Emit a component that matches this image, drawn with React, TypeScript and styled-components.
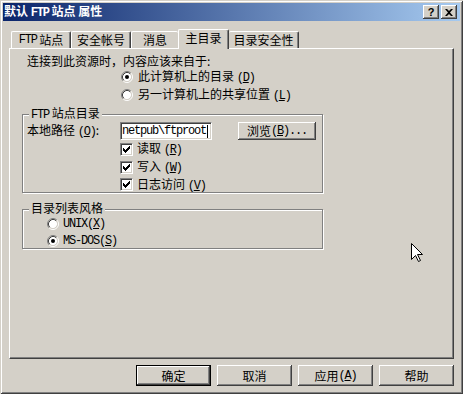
import styled, { createGlobalStyle } from 'styled-components'

const face = '#D4D0C8'
const shadow = '#808080'
const dark = '#404040'

const GlobalStyle = createGlobalStyle`
  html, body {
    margin: 0;
    padding: 0;
    background: ${face};
  }
  body {
    font-family: "Noto Sans CJK SC", "Liberation Sans", sans-serif;
    font-size: 12px;
    color: #000;
  }
  * {
    box-sizing: border-box;
  }
`

const Window = styled.div`
  position: relative;
  width: 463px;
  height: 394px;
  padding: 3px;
  display: flex;
  flex-direction: column;
  background: ${face};
  box-shadow: inset 1px 1px ${face}, inset -1px -1px ${dark}, inset 2px 2px #fff, inset -2px -2px ${shadow};
`

const TitleBar = styled.div`
  flex: none;
  height: 18px;
  display: flex;
  align-items: center;
  justify-content: space-between;
  padding: 0 3px 0 1px;
  background: linear-gradient(to right, #0a246a, #a6caf0);
  color: #fff;
  font-weight: bold;
  line-height: 18px;
`

const CaptionButtons = styled.div`
  display: flex;
  gap: 2px;
`

const CaptionButton = styled.div`
  width: 16px;
  height: 14px;
  display: flex;
  align-items: center;
  justify-content: center;
  background: ${face};
  color: #000;
  font-family: "Liberation Sans", sans-serif;
  font-size: 11px;
  font-weight: bold;
  box-shadow: inset -1px -1px ${dark}, inset 1px 1px #fff, inset -2px -2px ${shadow};
`

const Body = styled.div`
  flex: 1;
  display: flex;
  flex-direction: column;
  padding: 8px 6px 0 6px;
`

const TabRow = styled.div`
  height: 19px;
  display: flex;
  align-items: flex-end;
  padding-left: 2px;
`

const Tab = styled.div<{ $w: number; $active?: boolean; $noLeft?: boolean; $noRight?: boolean }>`
  position: relative;
  z-index: ${p => (p.$active ? 1 : 0)};
  width: ${p => p.$w}px;
  height: ${p => (p.$active ? 20 : 17)}px;
  margin-bottom: ${p => (p.$active ? -1 : 0)}px;
  display: flex;
  align-items: center;
  justify-content: center;
  padding-bottom: ${p => (p.$active ? 3 : 0)}px;
  background: ${face};
  border-top: 1px solid #fff;
  border-left: ${p => (p.$noLeft ? 'none' : '1px solid #fff')};
  border-right: ${p => (p.$noRight ? 'none' : `1px solid ${dark}`)};
  box-shadow: ${p => (p.$noRight ? 'none' : `inset -1px 0 ${shadow}`)};
  border-top-left-radius: 2px;
  border-top-right-radius: 2px;
  white-space: nowrap;
  line-height: 14px;
`

const Panel = styled.div`
  height: 311px;
  padding: 5px 12px 0 12px;
  border: 1px solid;
  border-color: #fff ${dark} ${dark} #fff;
  box-shadow: inset -1px -1px ${shadow};
`

const Intro = styled.div`
  height: 14px;
  line-height: 14px;
  margin-left: 5px;
`

const Row = styled.div<{ $h: number; $indent: number; $gap: number }>`
  height: ${p => p.$h}px;
  display: flex;
  align-items: center;
  gap: ${p => p.$gap}px;
  padding-left: ${p => p.$indent}px;
  line-height: 14px;
  white-space: nowrap;
`

const Group = styled.div<{ $top: number; $h: number; $pad: string }>`
  position: relative;
  width: 301px;
  height: ${p => p.$h}px;
  margin-top: ${p => p.$top}px;
  padding: ${p => p.$pad};
  border: 1px solid ${shadow};
  box-shadow: inset 1px 1px #fff, 1px 1px #fff;
`

const GroupLabel = styled.span`
  position: absolute;
  top: -8px;
  left: 6px;
  height: 12px;
  padding: 0 2px;
  background: ${face};
  line-height: 12px;
  white-space: nowrap;
`

const PathLabel = styled.span`
  width: 93px;
  flex: none;
`

const TextInput = styled.div`
  width: 92px;
  height: 18px;
  display: flex;
  align-items: center;
  background: #fff;
  border: 1px solid;
  border-color: ${shadow} #fff #fff ${shadow};
  box-shadow: inset 1px 1px ${dark}, inset -1px -1px ${face};
  padding-left: 1px;
  overflow: hidden;
`

const Caret = styled.span`
  width: 1px;
  height: 13px;
  margin-left: 1px;
  background: #000;
`

const Button = styled.div<{ $w: number; $h: number; $default?: boolean }>`
  width: ${p => p.$w}px;
  height: ${p => p.$h}px;
  display: flex;
  align-items: center;
  justify-content: center;
  background: ${face};
  border: ${p => (p.$default ? '1px solid #000' : 'none')};
  box-shadow: inset -1px -1px ${dark}, inset 1px 1px #fff, inset -2px -2px ${shadow};
  line-height: 14px;
  white-space: nowrap;
`

const BrowseButton = styled(Button)`
  margin-left: 26px;
`

const ButtonRow = styled.div`
  display: flex;
  justify-content: flex-end;
  gap: 6px;
  margin-top: 6px;
`

const Latin = styled.span<{ $bold?: boolean }>`
  font-family: "Liberation Mono", "DejaVu Sans Mono", monospace;
  font-size: 12px;
  letter-spacing: -1.2px;
  font-weight: ${p => (p.$bold ? 'bold' : 'normal')};
`

const Key = styled.span`
  text-decoration: underline;
`

const CheckBox = styled.span`
  width: 13px;
  height: 13px;
  flex: none;
  display: flex;
  align-items: center;
  justify-content: center;
  background: #fff;
  border: 1px solid;
  border-color: ${shadow} #fff #fff ${shadow};
  box-shadow: inset 1px 1px ${dark}, inset -1px -1px ${face};
`

const Pointer = styled.svg`
  position: absolute;
  left: 411px;
  top: 243px;
`

function Radio({ checked }: { checked?: boolean }) {
  return (
    <svg width="12" height="12" viewBox="0 0 12 12" style={{ flex: 'none' }}>
      <circle cx="6" cy="6" r="4.2" fill="#fff" />
      <path d="M2.11 9.89 A5.5 5.5 0 0 1 9.89 2.11" fill="none" stroke={shadow} />
      <path d="M9.89 2.11 A5.5 5.5 0 0 1 2.11 9.89" fill="none" stroke="#fff" />
      <path d="M2.82 9.18 A4.5 4.5 0 0 1 9.18 2.82" fill="none" stroke={dark} />
      <path d="M9.18 2.82 A4.5 4.5 0 0 1 2.82 9.18" fill="none" stroke={face} />
      {checked && <circle cx="6" cy="6" r="2" fill="#000" />}
    </svg>
  )
}

function Check() {
  return (
    <CheckBox>
      <svg width="7" height="7" viewBox="0 0 7 7">
        <path
          d="M0 2h1v3H0z M1 3h1v3H1z M2 4h1v3H2z M3 3h1v3H3z M4 2h1v3H4z M5 1h1v3H5z M6 0h1v3H6z"
          fill="#000"
        />
      </svg>
    </CheckBox>
  )
}

function Mnemonic({ k }: { k: string }) {
  return (
    <Latin>
      (<Key>{k}</Key>)
    </Latin>
  )
}

export default function App() {
  return (
    <>
      <GlobalStyle />
      <Window>
        <TitleBar>
          <span>
            默认 <Latin $bold>FTP</Latin> 站点 属性
          </span>
          <CaptionButtons>
            <CaptionButton>?</CaptionButton>
            <CaptionButton>
              <svg width="8" height="7" viewBox="0 0 8 7">
                <path d="M0 0h2l2 2 2-2h2L5 3.5 8 7H6L4 5 2 7H0l3-3.5z" fill="#000" />
              </svg>
            </CaptionButton>
          </CaptionButtons>
        </TitleBar>

        <Body>
          <TabRow>
            <Tab $w={60}>
              <Latin>FTP</Latin>&nbsp;站点
            </Tab>
            <Tab $w={60}>安全帐号</Tab>
            <Tab $w={47} $noRight>
              消息
            </Tab>
            <Tab $w={51} $active>
              主目录
            </Tab>
            <Tab $w={70} $noLeft>
              目录安全性
            </Tab>
          </TabRow>

          <Panel>
            <Intro>连接到此资源时，内容应该来自于:</Intro>
            <Row $h={18} $indent={99} $gap={5}>
              <Radio checked />
              <span>
                此计算机上的目录 <Mnemonic k="D" />
              </span>
            </Row>
            <Row $h={18} $indent={99} $gap={5}>
              <Radio />
              <span>
                另一计算机上的共享位置 <Mnemonic k="L" />
              </span>
            </Row>

            <Group $top={10} $h={79} $pad="7px 0 0 4px">
              <GroupLabel>
                <Latin>FTP</Latin> 站点目录
              </GroupLabel>
              <Row $h={18} $indent={0} $gap={0}>
                <PathLabel>
                  本地路径 <Mnemonic k="O" />:
                </PathLabel>
                <TextInput>
                  <Latin>netpub\ftproot</Latin>
                  <Caret />
                </TextInput>
                <BrowseButton $w={78} $h={18}>
                  浏览 <Mnemonic k="B" />
                  <Latin>...</Latin>
                </BrowseButton>
              </Row>
              <Row $h={18} $indent={93} $gap={4}>
                <Check />
                <span>
                  读取 <Mnemonic k="R" />
                </span>
              </Row>
              <Row $h={18} $indent={93} $gap={4}>
                <Check />
                <span>
                  写入 <Mnemonic k="W" />
                </span>
              </Row>
              <Row $h={17} $indent={93} $gap={4}>
                <Check />
                <span>
                  日志访问 <Mnemonic k="V" />
                </span>
              </Row>
            </Group>

            <Group $top={16} $h={40} $pad="5px 0 0 24px">
              <GroupLabel>目录列表风格</GroupLabel>
              <Row $h={17} $indent={0} $gap={4}>
                <Radio />
                <Latin>
                  UNIX(<Key>X</Key>)
                </Latin>
              </Row>
              <Row $h={17} $indent={0} $gap={4}>
                <Radio checked />
                <Latin>
                  MS-DOS(<Key>S</Key>)
                </Latin>
              </Row>
            </Group>
          </Panel>

          <ButtonRow>
            <Button $w={75} $h={21} $default>
              确定
            </Button>
            <Button $w={75} $h={21}>
              取消
            </Button>
            <Button $w={75} $h={21}>
              应用 <Mnemonic k="A" />
            </Button>
            <Button $w={75} $h={21}>
              帮助
            </Button>
          </ButtonRow>
        </Body>

        <Pointer width="13" height="20" viewBox="0 0 13 20">
          <path d="M0.5 0.5V16.5L4.5 12.5L7.5 18.5L9.5 17.5L6.5 11.5H11.5Z" fill="#fff" stroke="#000" />
        </Pointer>
      </Window>
    </>
  )
}
